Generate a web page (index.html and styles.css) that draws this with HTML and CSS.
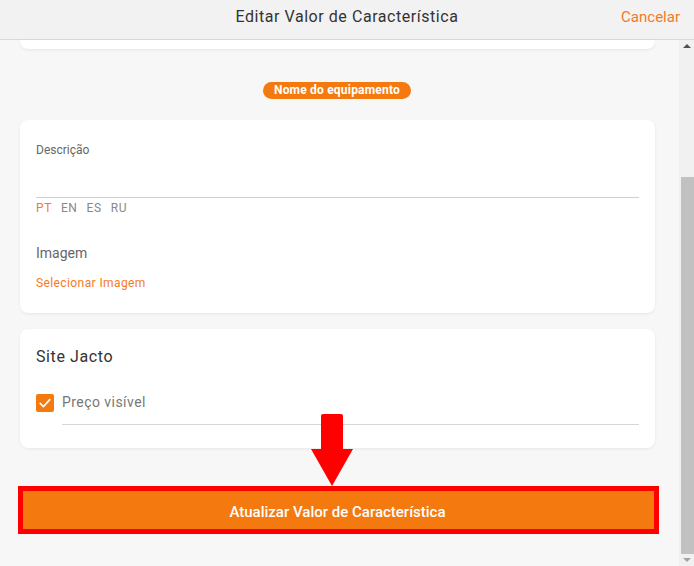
FILE: index.html
```html
<!DOCTYPE html>
<html lang="pt">
<head>
<meta charset="utf-8">
<title>Editar Valor de Característica</title>
<link rel="stylesheet" href="styles.css">
</head>
<body>
<header class="topbar">
  <div class="topbar-title">Editar Valor de Característica</div>
  <a class="topbar-cancel">Cancelar</a>
</header>
<div class="viewport">
  <main class="content">
    <div class="card card-partial"></div>
    <div class="badge-row"><span class="badge">Nome do equipamento</span></div>

    <section class="card card-desc">
      <div class="field-label">Descrição</div>
      <div class="field-input"></div>
      <div class="langs">
        <span class="lang active">PT</span>
        <span class="lang">EN</span>
        <span class="lang">ES</span>
        <span class="lang">RU</span>
      </div>
      <div class="image-label">Imagem</div>
      <a class="image-link">Selecionar Imagem</a>
    </section>

    <section class="card card-site">
      <div class="card-title">Site Jacto</div>
      <label class="check-row">
        <span class="checkbox">
          <svg viewBox="0 0 18 18" width="18" height="18"><path d="M4.2 9.4 L7.4 12.6 L13.8 5.6" fill="none" stroke="#fff" stroke-width="1.6" stroke-linecap="round" stroke-linejoin="round"/></svg>
        </span>
        <span class="check-text">Preço visível</span>
      </label>
      <div class="check-line"></div>
    </section>

    <div class="button-wrap">
      <button class="primary-btn">Atualizar Valor de Característica</button>
      <div class="annot-box"></div>
      <svg class="annot-arrow" viewBox="0 0 44 73" width="44" height="73">
        <path d="M11 2 Q11 0 13 0 L31 0 Q33 0 33 2 L33 35 L43 35 L22 72 L1 35 L11 35 Z" fill="#ff0000"/>
      </svg>
    </div>
  </main>
  <div class="scrollbar">
    <div class="sb-arrow sb-up"></div>
    <div class="sb-track"><div class="sb-thumb"></div></div>
    <div class="sb-arrow sb-down"></div>
  </div>
</div>
</body>
</html>
```

FILE: styles.css
```css
* { box-sizing: border-box; }
html, body { margin: 0; padding: 0; }
body {
  width: 694px;
  height: 566px;
  overflow: hidden;
  background: #f7f7f7;
  font-family: Roboto, "Liberation Sans", sans-serif;
  color: #333;
}
.topbar {
  height: 40px;
  background: #f2f2f2;
  border-bottom: 1px solid #d9d9d9;
  display: flex;
  align-items: center;
  justify-content: center;
  position: relative;
}
.topbar-title {
  font-size: 16px;
  color: #333;
  letter-spacing: 0.55px;
  margin-top: -6px;
}
.topbar-cancel {
  position: absolute;
  right: 14px;
  top: 8px;
  font-size: 15px;
  color: #f47a1f;
}
.viewport {
  display: flex;
  height: 526px;
}
.content {
  flex: 1;
  padding: 0 24px 0 20px;
  position: relative;
}
.card {
  background: #fff;
  border-radius: 8px;
  box-shadow: 0 1px 3px rgba(0,0,0,0.07);
}
.card-partial {
  height: 9px;
  border-radius: 0 0 8px 8px;
}
.badge-row {
  display: flex;
  justify-content: center;
  margin-top: 33px;
  padding-right: 1px;
}
.badge {
  background: #f47a0f;
  color: #fff;
  font-size: 12px;
  font-weight: 700;
  letter-spacing: 0.2px;
  line-height: 17px;
  height: 17px;
  padding: 0 11px;
  border-radius: 9px;
}
.card-desc {
  margin-top: 21px;
  padding: 22px 16px 22px 16px;
  height: 193px;
}
.field-label {
  font-size: 12px;
  line-height: 16px;
  color: #666;
}
.field-input {
  height: 40px;
  border-bottom: 1px solid #d0d0d0;
}
.langs {
  margin-top: 2px;
  display: flex;
  gap: 9px;
  font-size: 12px;
  line-height: 16px;
  letter-spacing: 0.6px;
  color: #888;
}
.lang.active { color: #f47a1f; }
.image-label {
  margin-top: 27px;
  font-size: 14px;
  line-height: 20px;
  color: #666;
}
.image-link {
  display: block;
  margin-top: 12px;
  font-size: 12px;
  line-height: 16px;
  letter-spacing: 0.4px;
  color: #f47a1f;
}
.card-site {
  margin-top: 16px;
  padding: 17px 16px 0 16px;
  height: 119px;
}
.card-title {
  font-size: 16px;
  line-height: 22px;
  letter-spacing: 0.6px;
  color: #333;
}
.check-row {
  margin-top: 26px;
  display: flex;
  align-items: center;
  gap: 8px;
  height: 18px;
}
.checkbox {
  width: 18px;
  height: 18px;
  background: #f47a0f;
  border-radius: 2px;
  display: block;
}
.checkbox svg { display: block; }
.check-text {
  font-size: 14px;
  letter-spacing: 0.45px;
  color: #777;
  margin-top: -2px;
}
.check-line {
  margin: 12px 0 0 26px;
  height: 1px;
  background: #d6d6d6;
}
.button-wrap {
  position: relative;
  margin-top: 40px;
}
.primary-btn {
  display: block;
  width: 100%;
  height: 44px;
  border: none;
  background: #f47a0f;
  color: #fff;
  font-family: Roboto, "Liberation Sans", sans-serif;
  font-size: 15px;
  font-weight: 500;
  padding: 4px 0 0 0;
}
.annot-box {
  position: absolute;
  left: -2px;
  top: -2px;
  width: 641px;
  height: 48px;
  border: 5px solid #ff0000;
}
.annot-arrow {
  position: absolute;
  left: 290px;
  top: -74px;
}
.scrollbar {
  width: 15px;
  background: #f1f1f1;
  display: flex;
  flex-direction: column;
}
.sb-arrow {
  height: 15px;
  display: flex;
  align-items: center;
  justify-content: center;
}
.sb-up::before {
  content: "";
  border-left: 4px solid transparent;
  border-right: 4px solid transparent;
  border-bottom: 4px solid #505050;
}
.sb-down::before {
  content: "";
  border-left: 4px solid transparent;
  border-right: 4px solid transparent;
  border-top: 4px solid #a3a3a3;
}
.sb-track {
  flex: 1;
  padding: 124px 0 0 2px;
}
.sb-thumb {
  height: 377px;
  background: #c1c1c1;
}
```
